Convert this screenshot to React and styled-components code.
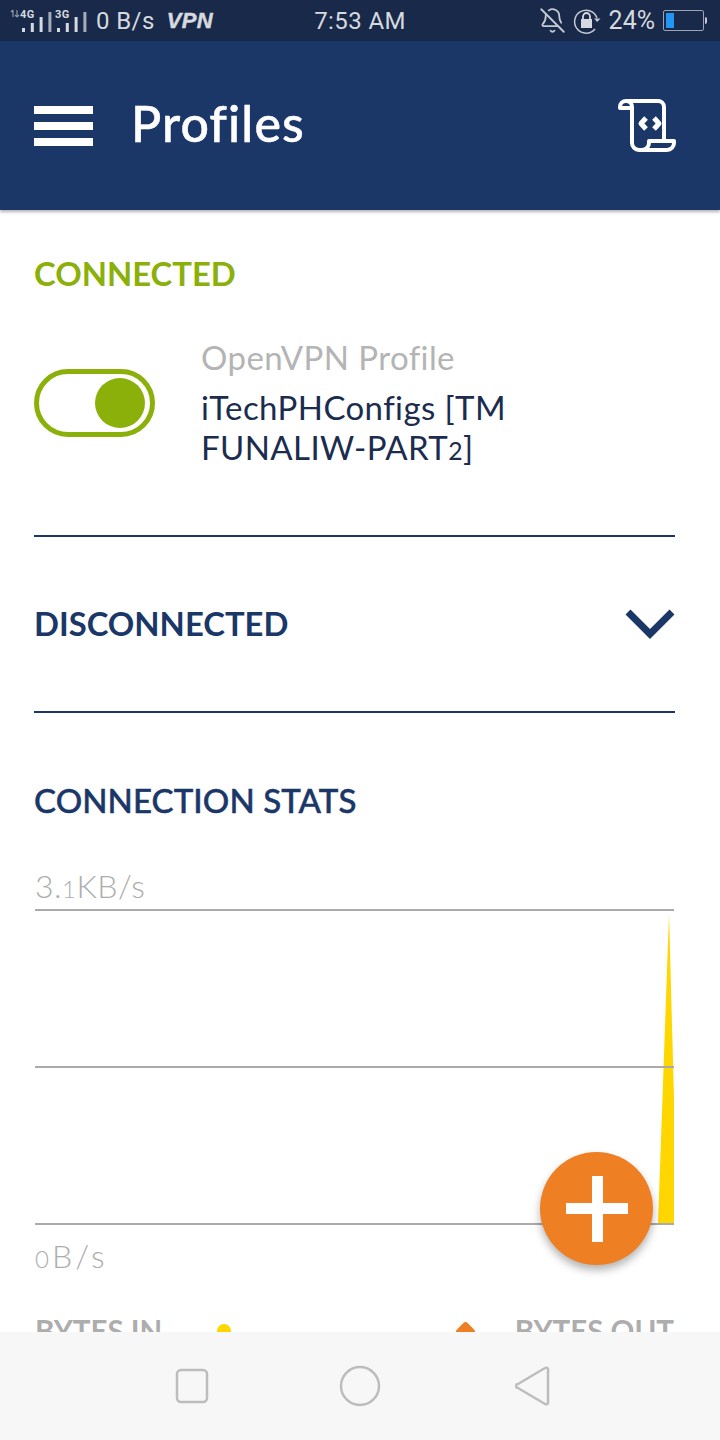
import React from 'react'
import styled, { createGlobalStyle } from 'styled-components'
import { BellOff } from 'lucide-react'

const GlobalStyle = createGlobalStyle`
    html, body {
        margin: 0;
        padding: 0;
        background: #fff;
    }
`
const Page = styled.div`
    width: 720px;
    height: 1440px;
    display: flex;
    flex-direction: column;
    overflow: hidden;
    font-family: Lato, "Open Sans", sans-serif;
    background: #fff;
`
const StatusBar = styled.div`
    height: 41px;
    flex: none;
    background: #18294a;
    color: #d6d9de;
    display: grid;
    grid-template-columns: 1fr auto 1fr;
    align-items: center;
    font-family: Roboto, sans-serif;
    font-size: 24px;
    letter-spacing: 0.4px;
`
const StatusLeft = styled.div`
    display: flex;
    align-items: center;
    padding-left: 10px;
`
const StatusRight = styled.div`
    display: flex;
    align-items: center;
    justify-content: flex-end;
    padding-right: 13px;
    gap: 7px;
`
const Speed = styled.span`
    margin-left: 6px;
`
const VpnTag = styled.span`
    margin-left: 12px;
    font-family: "Liberation Sans", sans-serif;
    font-weight: 700;
    font-style: italic;
    font-size: 22px;
    -webkit-text-stroke: 0.5px #d6d9de;
`
const Percent = styled.span`
    margin: 0 1px 0 1px;
    font-size: 25px;
    letter-spacing: 0;
`
const BatteryGroup = styled.div`
    display: flex;
    align-items: center;
`
const Battery = styled.div`
    width: 35px;
    height: 15px;
    border: 1.5px solid #9aa3b2;
    border-radius: 2px;
    padding: 2px;
    display: flex;
    box-sizing: content-box;
`
const BatteryFill = styled.div`
    width: 24%;
    background: #2196f3;
`
const BatteryNub = styled.div`
    width: 2px;
    height: 7px;
    margin-left: 1px;
    background: #c5c9d1;
    border-radius: 0 2px 2px 0;
`
const Header = styled.header`
    height: 169px;
    flex: none;
    background: #1a3768;
    color: #fff;
    display: flex;
    align-items: center;
    padding: 0 44px 0 34px;
    position: relative;
    box-shadow: 0 2px 3px rgba(0, 0, 0, 0.3);
`
const Burger = styled.div`
    width: 59px;
    display: flex;
    flex-direction: column;
    gap: 8px;
    margin-right: 38px;
`
const BurgerBar = styled.div`
    height: 8px;
    background: #fff;
`
const Title = styled.h1`
    flex: 1;
    margin: 0 0 5px;
    font-size: 50px;
    font-weight: 500;
    letter-spacing: 1.1px;
    -webkit-text-stroke: 0.5px #fff;
`
const Content = styled.main`
    flex: 1;
    min-height: 0;
    overflow: hidden;
    padding: 44px 45px 0 34px;
`
const SectionTitle = styled.h2`
    margin: 0;
    height: 40px;
    font-size: 32.8px;
    line-height: 40px;
    font-weight: 700;
    color: ${props => props.color || '#1a3768'};
`
const ProfileRow = styled.div`
    display: flex;
    align-items: center;
    margin-top: 43px;
`
const Toggle = styled.div`
    width: 121px;
    height: 68px;
    box-sizing: border-box;
    border: 5px solid #8bb009;
    border-radius: 34px;
    display: flex;
    align-items: center;
    justify-content: flex-end;
    padding-right: 5px;
    margin: 1px 46px 0 0;
`
const Knob = styled.div`
    width: 50px;
    height: 50px;
    border-radius: 50%;
    background: #8bb009;
`
const ProfileType = styled.div`
    font-size: 33px;
    line-height: 40px;
    letter-spacing: 0.4px;
    color: #b4b4b4;
    margin-bottom: 10px;
`
const ProfileName = styled.div`
    font-size: 33px;
    line-height: 40px;
    letter-spacing: 0.4px;
    color: #1b2c4e;
`
const OldNum = styled.span`
    font-size: 0.75em;
    line-height: 0;
`
const Divider = styled.div`
    height: 2px;
    background: #1a3768;
    margin-top: ${props => props.top || 0}px;
`
const CollapseRow = styled.div`
    height: 174px;
    display: flex;
    align-items: center;
    justify-content: space-between;
`
const StatsTitle = styled(SectionTitle)`
    margin-top: 67px;
    font-size: 33px;
    font-weight: 500;
    letter-spacing: 0.1px;
    -webkit-text-stroke: 0.5px #1a3768;
`
const AxisLabel = styled.div`
    font-size: 32px;
    line-height: 40px;
    font-weight: 300;
    letter-spacing: ${props => props.spacing || 0.5}px;
    color: #adadad;
    margin: ${props => props.top}px 0 0 1px;
`
const ChartBox = styled.div`
    position: relative;
    margin: 2px 1px 0;
    height: 318px;
`
const Fab = styled.div`
    position: absolute;
    right: 21px;
    bottom: -39px;
    width: 113px;
    height: 113px;
    border-radius: 50%;
    background: #ee7f22;
    box-shadow: 0 5px 8px rgba(0, 0, 0, 0.3);
    display: flex;
    align-items: center;
    justify-content: center;
`
const Legend = styled.div`
    display: flex;
    justify-content: space-between;
    align-items: center;
    margin: 35px 1px 0;
`
const LegendItem = styled.div`
    display: flex;
    align-items: center;
    gap: ${props => props.gap}px;
`
const LegendText = styled.span`
    font-size: 29.5px;
    line-height: 40px;
    font-weight: 700;
    color: #adadad;
`
const Dot = styled.span`
    width: 14px;
    height: 14px;
    border-radius: 50%;
    background: #ffd600;
`
const Diamond = styled.span`
    width: 15px;
    height: 15px;
    border-radius: 3px;
    background: #ee7f22;
    transform: rotate(45deg);
`
const NavBar = styled.nav`
    height: 108px;
    flex: none;
    background: #f7f7f7;
    display: flex;
    align-items: center;
    justify-content: center;
    gap: 130px;
    padding-left: 6px;
    position: relative;
`

const Signal = ({ label, bars }) => (
    <svg width="35" height="24" viewBox="0 0 35 24" fill="#d6d9de">
        <text x="0" y="9" fontSize="11" fontWeight="700" fontFamily="Roboto, sans-serif">{label}</text>
        {bars.map((h, i) => (
            <rect key={i} x={2 + i * 8.8} y={23 - h} width="3" height={h} opacity={i === 3 ? 0.75 : 1} />
        ))}
    </svg>
)

const LockRotate = () => (
    <svg width="28" height="26" viewBox="0 0 28 26" fill="none" stroke="#c5c9d1" strokeWidth="1.5">
        <path d="M24 10 A11.5 11.5 0 1 0 22 21" />
        <path d="M21 10.5 H27.5 L24.2 14 Z" fill="#c5c9d1" stroke="none" />
        <rect x="8" y="11" width="11" height="9" fill="#d6d9de" stroke="none" />
        <path d="M10 11 V8.5 a3.5 3.5 0 0 1 7 0 V11" strokeWidth="1.8" stroke="#d6d9de" />
    </svg>
)

const ScriptIcon = () => (
    <svg width="58" height="53" viewBox="0 0 58 53" fill="none" stroke="#fff" strokeWidth="4" strokeLinejoin="round">
        <path d="M8 2 H40 a6 6 0 0 1 6 6 V42" />
        <path d="M14 9 V44 a7 7 0 0 0 7 7 H49 a7 7 0 0 0 7 -7 V42 H31 V44 a7 7 0 0 1 -7 7" />
        <path d="M8 2 a6 6 0 0 0 -6 6 V9 H14 V8 a6 6 0 0 0 -6 -6" />
        <path d="M28 19 L23 24.5 L28 30 M36 19 L41 24.5 L36 30" strokeWidth="5" />
    </svg>
)

const Chart = () => (
    <svg width="639" height="318" viewBox="0 0 639 318">
        <path d="M634 6 L623 316 H639 V190 Z" fill="#ffd600" />
        <path d="M0 2 H639 M0 159 H639 M0 316 H639" stroke="#aaa" strokeWidth="2" />
    </svg>
)

const App = () => {
    return (
        <Page>
            <GlobalStyle />
            <StatusBar>
                <StatusLeft>
                    <svg width="10" height="24" viewBox="0 0 10 24" fill="none" stroke="#8f97a6" strokeWidth="1.2">
                        <path d="M3 8 V1 M1 3 L3 1 M7 1 V8 M5 6 L7 8 M9 6 L7 8" />
                    </svg>
                    <Signal label="4G" bars={[4, 9, 15, 20]} />
                    <Signal label="3G" bars={[4, 9, 15, 20]} />
                    <Speed>0 B/s</Speed>
                    <VpnTag>VPN</VpnTag>
                </StatusLeft>
                <span>7:53 AM</span>
                <StatusRight>
                    <BellOff size={27} color="#c5c9d1" strokeWidth={1.6} />
                    <LockRotate />
                    <Percent>24%</Percent>
                    <BatteryGroup>
                        <Battery><BatteryFill /></Battery>
                        <BatteryNub />
                    </BatteryGroup>
                </StatusRight>
            </StatusBar>
            <Header>
                <Burger>
                    <BurgerBar />
                    <BurgerBar />
                    <BurgerBar />
                </Burger>
                <Title>Profiles</Title>
                <ScriptIcon />
            </Header>
            <Content>
                <SectionTitle color="#8bb009">CONNECTED</SectionTitle>
                <ProfileRow>
                    <Toggle><Knob /></Toggle>
                    <div>
                        <ProfileType>OpenVPN Profile</ProfileType>
                        <ProfileName>iTechPHConfigs [TM<br />FUNALIW-PART<OldNum>2</OldNum>]</ProfileName>
                    </div>
                </ProfileRow>
                <Divider top={68} />
                <CollapseRow>
                    <SectionTitle>DISCONNECTED</SectionTitle>
                    <svg width="50" height="30" viewBox="0 0 50 30" fill="none" stroke="#1a3768" strokeWidth="7">
                        <path d="M3 3 L25 25 L47 3" />
                    </svg>
                </CollapseRow>
                <Divider />
                <StatsTitle>CONNECTION STATS</StatsTitle>
                <AxisLabel top={46}>3.<OldNum>1</OldNum>KB/s</AxisLabel>
                <ChartBox>
                    <Chart />
                    <Fab>
                        <svg width="62" height="66" viewBox="0 0 62 66" fill="#fff">
                            <path d="M26 0 H37 V27 H62 V38 H37 V66 H26 V38 H0 V27 H26 Z" />
                        </svg>
                    </Fab>
                </ChartBox>
                <AxisLabel top={10} spacing={3}><OldNum>0</OldNum>B/s</AxisLabel>
                <Legend>
                    <LegendItem gap={55}>
                        <LegendText>BYTES IN</LegendText>
                        <Dot />
                    </LegendItem>
                    <LegendItem gap={42}>
                        <Diamond />
                        <LegendText>BYTES OUT</LegendText>
                    </LegendItem>
                </Legend>
            </Content>
            <NavBar>
                <svg width="34" height="36" viewBox="0 0 34 36" fill="none" stroke="#bdbdbd" strokeWidth="2.5">
                    <rect x="2" y="2" width="30" height="32" rx="4" />
                </svg>
                <svg width="46" height="42" viewBox="0 0 46 42" fill="none" stroke="#bdbdbd" strokeWidth="2.5">
                    <circle cx="21" cy="21" r="19" />
                </svg>
                <svg width="36" height="40" viewBox="0 0 36 40" fill="none" stroke="#bdbdbd" strokeWidth="2.5" strokeLinejoin="round">
                    <path d="M33 3 a2 2 0 0 0 -3 -1 L3 18 a2 2 0 0 0 0 4 L30 38 a2 2 0 0 0 3 -1 Z" />
                </svg>
            </NavBar>
        </Page>
    )
}

export default App
